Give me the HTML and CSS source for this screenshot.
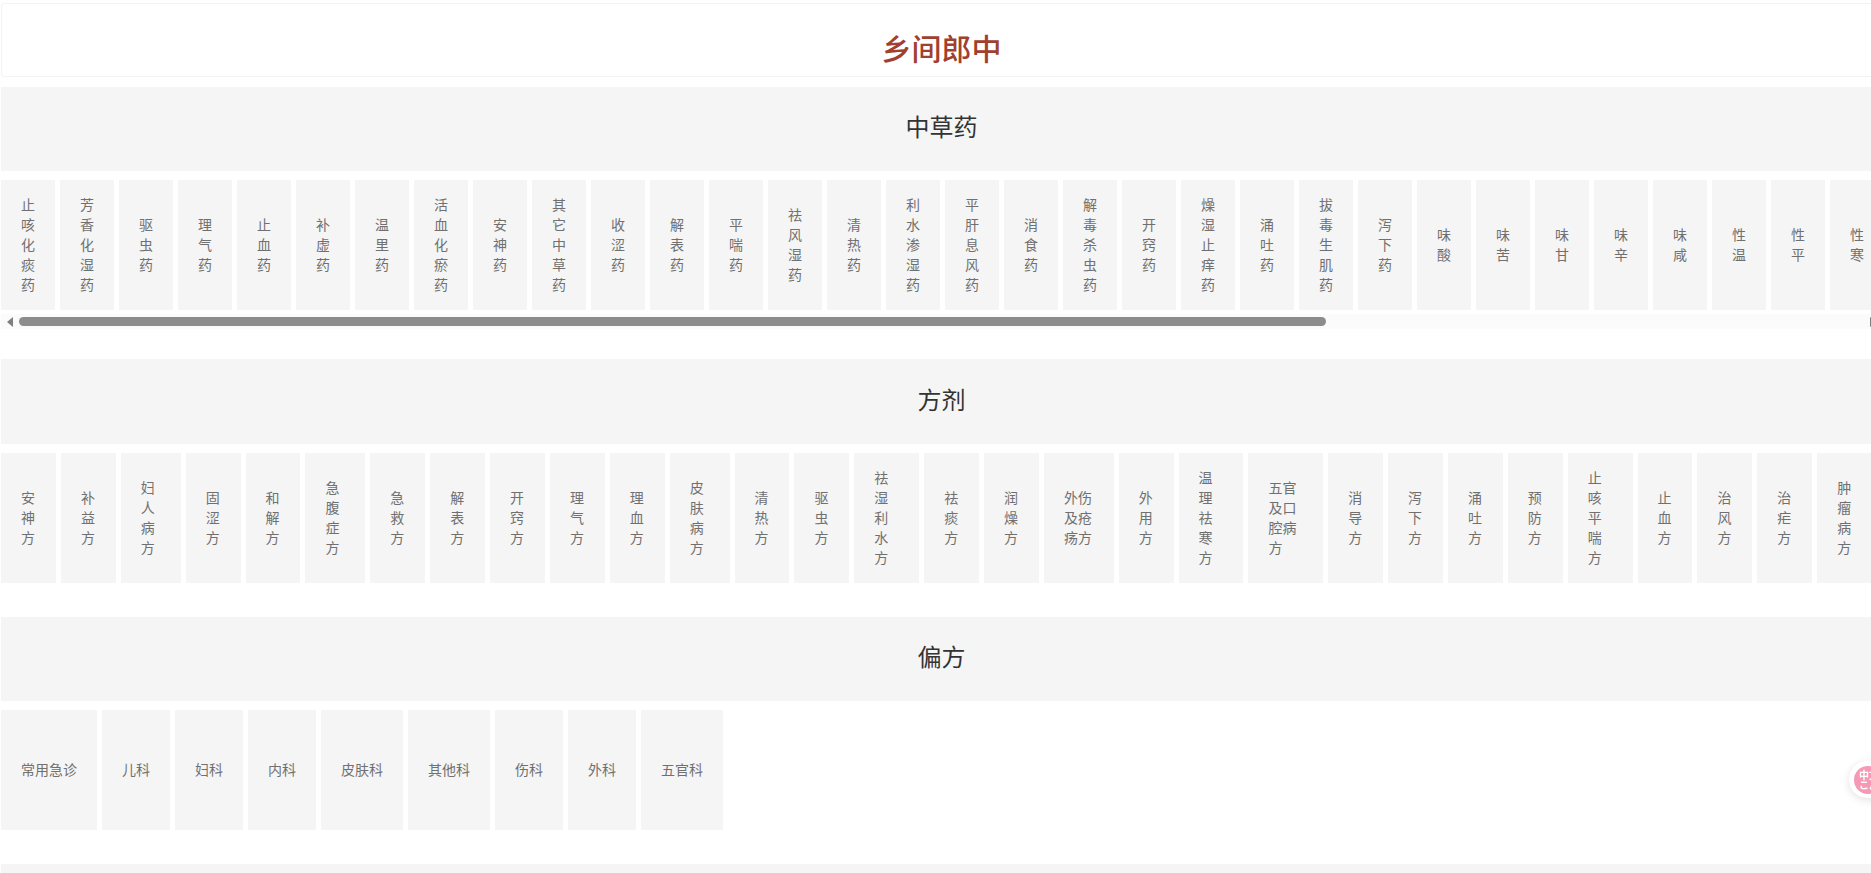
FILE: index.html
```html
<!DOCTYPE html>
<html lang="zh-CN">
<head>
  <meta charset="UTF-8">
  <meta name="viewport" content="width=device-width, initial-scale=1.0">
  <title>乡间郎中</title>
  <link rel="stylesheet" href="styles.css">
</head>
<body>
  <div class="page">
    <header class="site-title">
      <h1>乡间郎中</h1>
    </header>

    <section class="group">
      <h2 class="group-title">中草药</h2>
      <div class="tiles">
        <a class="tile">止咳化痰药</a>
        <a class="tile">芳香化湿药</a>
        <a class="tile">驱虫药</a>
        <a class="tile">理气药</a>
        <a class="tile">止血药</a>
        <a class="tile">补虚药</a>
        <a class="tile">温里药</a>
        <a class="tile">活血化瘀药</a>
        <a class="tile">安神药</a>
        <a class="tile">其它中草药</a>
        <a class="tile">收涩药</a>
        <a class="tile">解表药</a>
        <a class="tile">平喘药</a>
        <a class="tile">祛风湿药</a>
        <a class="tile">清热药</a>
        <a class="tile">利水渗湿药</a>
        <a class="tile">平肝息风药</a>
        <a class="tile">消食药</a>
        <a class="tile">解毒杀虫药</a>
        <a class="tile">开窍药</a>
        <a class="tile">燥湿止痒药</a>
        <a class="tile">涌吐药</a>
        <a class="tile">拔毒生肌药</a>
        <a class="tile">泻下药</a>
        <a class="tile">味酸</a>
        <a class="tile">味苦</a>
        <a class="tile">味甘</a>
        <a class="tile">味辛</a>
        <a class="tile">味咸</a>
        <a class="tile">性温</a>
        <a class="tile">性平</a>
        <a class="tile">性寒</a>
      </div>
      <div class="scrollbar">
        <span class="arrow-left"></span>
        <span class="thumb"></span>
        <span class="arrow-right"></span>
      </div>
    </section>

    <section class="group">
      <h2 class="group-title">方剂</h2>
      <div class="tiles">
        <a class="tile">安神方</a>
        <a class="tile">补益方</a>
        <a class="tile">妇人病方</a>
        <a class="tile">固涩方</a>
        <a class="tile">和解方</a>
        <a class="tile">急腹症方</a>
        <a class="tile">急救方</a>
        <a class="tile">解表方</a>
        <a class="tile">开窍方</a>
        <a class="tile">理气方</a>
        <a class="tile">理血方</a>
        <a class="tile">皮肤病方</a>
        <a class="tile">清热方</a>
        <a class="tile">驱虫方</a>
        <a class="tile">祛湿利水方</a>
        <a class="tile">祛痰方</a>
        <a class="tile">润燥方</a>
        <a class="tile">外伤及疮疡方</a>
        <a class="tile">外用方</a>
        <a class="tile">温理祛寒方</a>
        <a class="tile">五官及口腔病方</a>
        <a class="tile">消导方</a>
        <a class="tile">泻下方</a>
        <a class="tile">涌吐方</a>
        <a class="tile">预防方</a>
        <a class="tile">止咳平喘方</a>
        <a class="tile">止血方</a>
        <a class="tile">治风方</a>
        <a class="tile">治疟方</a>
        <a class="tile">肿瘤病方</a>
      </div>
    </section>

    <section class="group">
      <h2 class="group-title">偏方</h2>
      <div class="tiles">
        <a class="tile">常用急诊</a>
        <a class="tile">儿科</a>
        <a class="tile">妇科</a>
        <a class="tile">内科</a>
        <a class="tile">皮肤科</a>
        <a class="tile">其他科</a>
        <a class="tile">伤科</a>
        <a class="tile">外科</a>
        <a class="tile">五官科</a>
      </div>
    </section>

    <section class="group">
      <h2 class="group-title"></h2>
    </section>
  </div>

  <div class="float-badge">
    <span class="badge-circle">中文<br>こん</span>
  </div>
</body>
</html>
```

FILE: styles.css
```css
html, body {
  margin: 0;
  height: 100%;
  overflow: hidden;
  background: #fff;
}
body {
  font-family: "Noto Sans CJK SC", "Noto Sans", sans-serif;
}
.page {
  width: 1881px;
  margin-left: 1px;
  padding-top: 2.5px;
}
.site-title {
  box-sizing: border-box;
  height: 74px;
  margin-bottom: 10.25px;
  border: 1px solid #f3f3f3;
  border-radius: 3px;
  display: flex;
  align-items: center;
  justify-content: center;
}
.site-title h1 {
  margin: 15px 0 0;
  font-size: 30px;
  font-weight: 500;
  line-height: 40px;
  color: #a0402f;
}
.group {
  margin-bottom: 30px;
}
.group-title {
  box-sizing: border-box;
  display: flex;
  align-items: center;
  justify-content: center;
  height: 84.5px;
  padding-bottom: 7px;
  margin: 0 0 9px;
  background: #f5f5f5;
  font-size: 24px;
  font-weight: 400;
  color: #333;
}
.tiles {
  display: flex;
  overflow: hidden;
  padding-bottom: 4px;
}
.tile {
  display: flex;
  align-items: center;
  box-sizing: border-box;
  min-height: 120px;
  padding: 14px 20px 16px;
  margin-right: 5px;
  background: #f5f5f5;
  font-size: 14px;
  line-height: 20px;
  color: #707070;
}
/* fake scrollbar under the first row */
.scrollbar {
  position: relative;
  display: flex;
  align-items: center;
  height: 15px;
  background: #fbfbfb;
}
.thumb {
  width: 1307px;
  height: 9px;
  margin-left: 6px;
  background: #8c8c8c;
  border-radius: 5px;
}
.arrow-left {
  width: 0;
  height: 0;
  margin-left: 6px;
  border-style: solid;
  border-width: 5px 6px 5px 0;
  border-color: transparent #7f7f7f transparent transparent;
}
.arrow-right {
  position: absolute;
  right: 6px;
  width: 0;
  height: 0;
  border-style: solid;
  border-width: 5px 0 5px 6px;
  border-color: transparent transparent transparent #7f7f7f;
}
.float-badge {
  position: fixed;
  top: 761px;
  left: 1849px;
  width: 60px;
  height: 37px;
  display: flex;
  align-items: center;
  padding-left: 5px;
  box-sizing: border-box;
  background: #fff;
  border-radius: 19px;
  box-shadow: 0 2px 8px rgba(0, 0, 0, 0.12);
}
.badge-circle {
  width: 28px;
  height: 28px;
  display: block;
  padding-top: 4px;
  padding-left: 5px;
  box-sizing: border-box;
  background: #f49ab4;
  border-radius: 50%;
  font-size: 10px;
  font-weight: 700;
  line-height: 10px;
  color: #fff;
  white-space: nowrap;
  overflow: hidden;
}
```
